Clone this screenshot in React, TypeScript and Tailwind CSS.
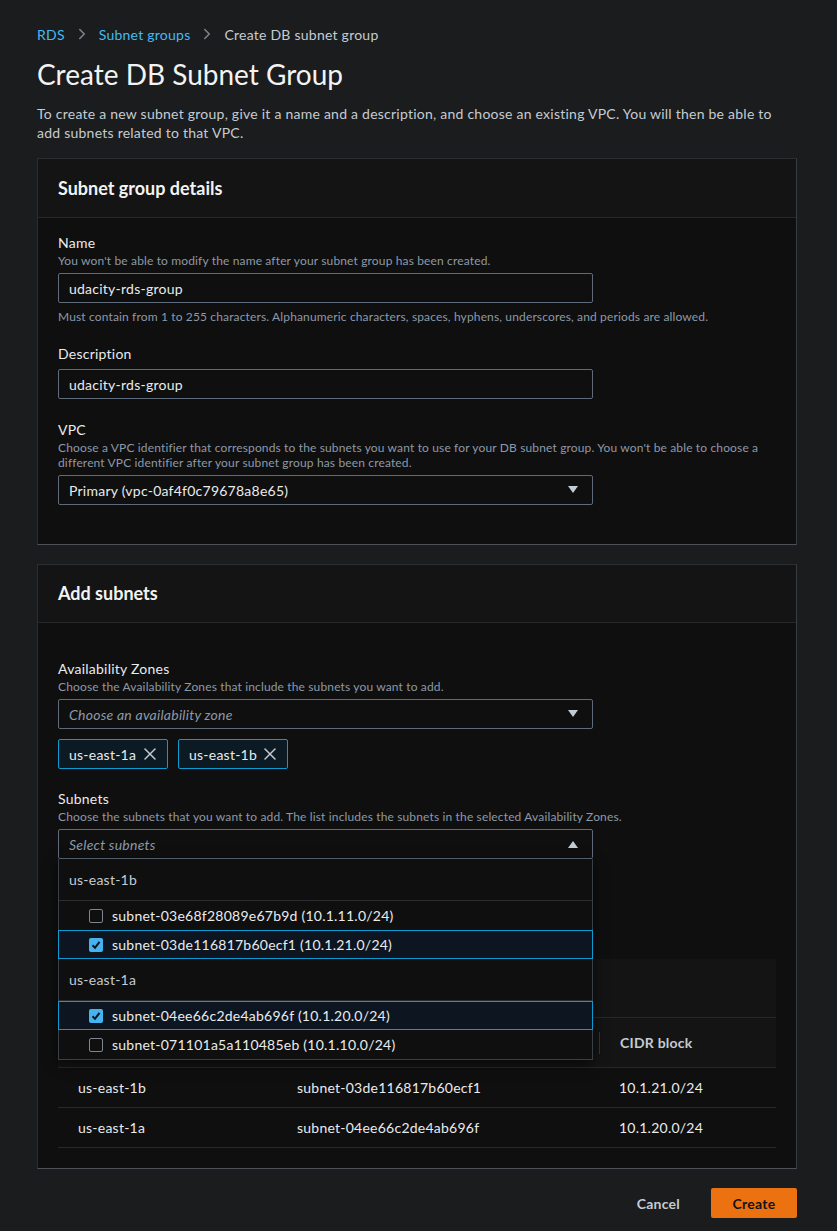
import { ChevronRight, X } from 'lucide-react';

const font = { fontFamily: 'Lato, "Noto Sans", sans-serif' };

function Caret({ up = false }: { up?: boolean }) {
  return (
    <svg width="12" height="10" viewBox="0 0 12 10" className="text-[#c5cbd2]">
      {up ? <polygon points="1,9 11,9 6,2" fill="currentColor" /> : <polygon points="1,1 11,1 6,8" fill="currentColor" />}
    </svg>
  );
}

function Checkbox({ checked }: { checked: boolean }) {
  if (!checked) {
    return <span className="block w-[14px] h-[14px] rounded-[2px] border border-[#7d8590]" />;
  }
  return (
    <span className="flex items-center justify-center w-[14px] h-[14px] rounded-[2px] bg-[#44b3f0]">
      <svg width="12" height="12" viewBox="0 0 12 12">
        <path d="M2.5 6.2 L5 8.8 L9.5 2.8" fill="none" stroke="#0f141a" strokeWidth="2" />
      </svg>
    </span>
  );
}

function Field({ label, hint, children }: { label: string; hint?: string; children: React.ReactNode }) {
  return (
    <div>
      <div className="text-[14px] leading-[20px] text-[#e9ebed]">{label}</div>
      {hint && <div className="text-[12px] leading-[15px] tracking-[0.012em] text-[#8d99a8]">{hint}</div>}
      <div className="mt-[5px]">{children}</div>
    </div>
  );
}

function Input({ value }: { value: string }) {
  return (
    <div className="w-[535px] h-[30px] flex items-center px-[10px] border border-[#5f6b7a] rounded-[2px] text-[14px] text-[#e9ebed]">
      {value}
    </div>
  );
}

function Select({ value, placeholder = false, up = false }: { value: string; placeholder?: boolean; up?: boolean }) {
  return (
    <div className="w-[535px] h-[30px] flex items-center justify-between pl-[10px] pr-[13px] border border-[#5f6b7a] rounded-[2px] text-[14px]">
      <span className={placeholder ? 'italic text-[#8d99a8]' : 'text-[#e9ebed]'}>{value}</span>
      <Caret up={up} />
    </div>
  );
}

function Token({ label }: { label: string }) {
  return (
    <div className="h-[30px] w-[110px] flex items-center justify-between pl-[10px] pr-[7px] border border-[#0d9ad1] bg-[#0b1a23] rounded-[2px] text-[14px] text-[#e9ebed]">
      {label}
      <X size={20} strokeWidth={1.8} className="text-[#c5cbd2]" />
    </div>
  );
}

const options = [
  { group: 'us-east-1b', items: [
    { id: 'subnet-03e68f28089e67b9d (10.1.11.0/24)', checked: false },
    { id: 'subnet-03de116817b60ecf1 (10.1.21.0/24)', checked: true },
  ] },
  { group: 'us-east-1a', items: [
    { id: 'subnet-04ee66c2de4ab696f (10.1.20.0/24)', checked: true },
    { id: 'subnet-071101a5a110485eb (10.1.10.0/24)', checked: false },
  ] },
];

const rows = [
  { az: 'us-east-1b', subnet: 'subnet-03de116817b60ecf1', cidr: '10.1.21.0/24' },
  { az: 'us-east-1a', subnet: 'subnet-04ee66c2de4ab696f', cidr: '10.1.20.0/24' },
];

export default function App() {
  return (
    <div style={font} className="min-h-screen bg-[#1b1c1d] pl-[37px] pr-[40px] pt-[24px] pb-[13px] tracking-[0.015em] text-[#e9ebed]">
      {/* Breadcrumbs */}
      <div className="flex items-center h-[20px] text-[14px]">
        <span className="text-[#44b9f6]">RDS</span>
        <ChevronRight size={18} className="mx-[8px] text-[#7d8590]" />
        <span className="text-[#44b9f6]">Subnet groups</span>
        <ChevronRight size={18} className="mx-[8px] text-[#7d8590]" />
        <span className="text-[#c5cbd2]">Create DB subnet group</span>
      </div>

      <h1 className="mt-[12px] text-[28px] leading-[36px] tracking-normal text-[#f2f3f3]">Create DB Subnet Group</h1>
      <p className="mt-[12px] text-[14px] leading-[19px] text-[#c5cbd2]">
        To create a new subnet group, give it a name and a description, and choose an existing VPC. You will then be able to add subnets related to that VPC.
      </p>

      {/* Subnet group details */}
      <section className="mt-[16px] border border-[#2b2e31] border-r-[#3a3d40] border-b-[#4b5157] bg-[#0f0f0f]">
        <div className="h-[59px] flex items-center px-[20px] bg-[#141414] border-b border-[#26292b]">
          <h2 className="text-[18px] font-bold tracking-normal text-[#f2f3f3]">Subnet group details</h2>
        </div>
        <div className="px-[20px] pt-[15px] pb-[39px]">
          <Field label="Name" hint="You won't be able to modify the name after your subnet group has been created.">
            <Input value="udacity-rds-group" />
          </Field>
          <div className="mt-[6px] text-[12px] leading-[16px] tracking-[0.012em] text-[#8d99a8]">
            Must contain from 1 to 255 characters. Alphanumeric characters, spaces, hyphens, underscores, and periods are allowed.
          </div>
          <div className="mt-[19px]">
            <Field label="Description">
              <Input value="udacity-rds-group" />
            </Field>
          </div>
          <div className="mt-[21px]">
            <Field label="VPC" hint="Choose a VPC identifier that corresponds to the subnets you want to use for your DB subnet group. You won't be able to choose a different VPC identifier after your subnet group has been created.">
              <Select value="Primary (vpc-0af4f0c79678a8e65)" />
            </Field>
          </div>
        </div>
      </section>

      {/* Add subnets */}
      <section className="mt-[19px] border border-[#2b2e31] border-r-[#3a3d40] border-b-[#4b5157] bg-[#0f0f0f]">
        <div className="h-[58px] flex items-center px-[20px] bg-[#141414] border-b border-[#26292b]">
          <h2 className="text-[18px] font-bold tracking-normal text-[#f2f3f3]">Add subnets</h2>
        </div>
        <div className="px-[20px] pt-[36px] pb-[20px]">
          <Field label="Availability Zones" hint="Choose the Availability Zones that include the subnets you want to add.">
            <Select value="Choose an availability zone" placeholder />
          </Field>
          <div className="mt-[10px] flex gap-[10px]">
            <Token label="us-east-1a" />
            <Token label="us-east-1b" />
          </div>

          <div className="mt-[20px]">
            <Field label="Subnets" hint="Choose the subnets that you want to add. The list includes the subnets in the selected Availability Zones.">
              <div className="relative w-[535px]">
                <Select value="Select subnets" placeholder up />
                <div className="absolute left-0 top-full z-10 w-[535px] bg-[#0f0f0f] border border-[#3b4046] border-t-0 shadow-[0_4px_12px_rgba(0,0,0,0.6)]">
                  {options.map((g) => (
                    <div key={g.group}>
                      <div className="h-[42px] flex items-center px-[10px] text-[14px] text-[#c5cbd2] border-b border-[#2b2e31]">{g.group}</div>
                      {g.items.map((o) => (
                        <div
                          key={o.id}
                          className={`h-[29px] flex items-center gap-[9px] pl-[30px] text-[14px] text-[#e9ebed] ${
                            o.checked ? 'border border-[#0d9ad1] bg-[#0d1620] -mx-px' : ''
                          }`}
                        >
                          <Checkbox checked={o.checked} />
                          {o.id}
                        </div>
                      ))}
                    </div>
                  ))}
                </div>
              </div>
            </Field>
          </div>

          {/* Selected subnets table */}
          <div className="mt-[100px]">
            <div className="h-[59px] bg-[#141414] border-b border-[#26292b]" />
            <div className="h-[50px] grid grid-cols-[219px_322px_1fr] items-center bg-[#141414] border-b border-[#26292b] text-[14px] font-bold text-[#c5cbd2]">
              <div className="px-[20px]">Availability zone</div>
              <div className="px-[20px]">Subnet ID</div>
              <div className="px-[20px] border-l border-[#33363a] h-[22px] flex items-center">CIDR block</div>
            </div>
            {rows.map((r) => (
              <div key={r.subnet} className="h-[40px] grid grid-cols-[219px_322px_1fr] items-center border-b border-[#26292b] text-[14px] text-[#e9ebed]">
                <div className="px-[20px]">{r.az}</div>
                <div className="px-[20px]">{r.subnet}</div>
                <div className="px-[20px]">{r.cidr}</div>
              </div>
            ))}
          </div>
        </div>
      </section>

      <div className="mt-[19px] flex justify-end items-center gap-[11px]">
        <button className="h-[30px] px-[20px] text-[14px] font-bold text-[#c5cbd2]">Cancel</button>
        <button className="h-[30px] w-[86px] rounded-[2px] bg-[#ec7211] text-[14px] font-bold text-[#0f141a]">Create</button>
      </div>
    </div>
  );
}
